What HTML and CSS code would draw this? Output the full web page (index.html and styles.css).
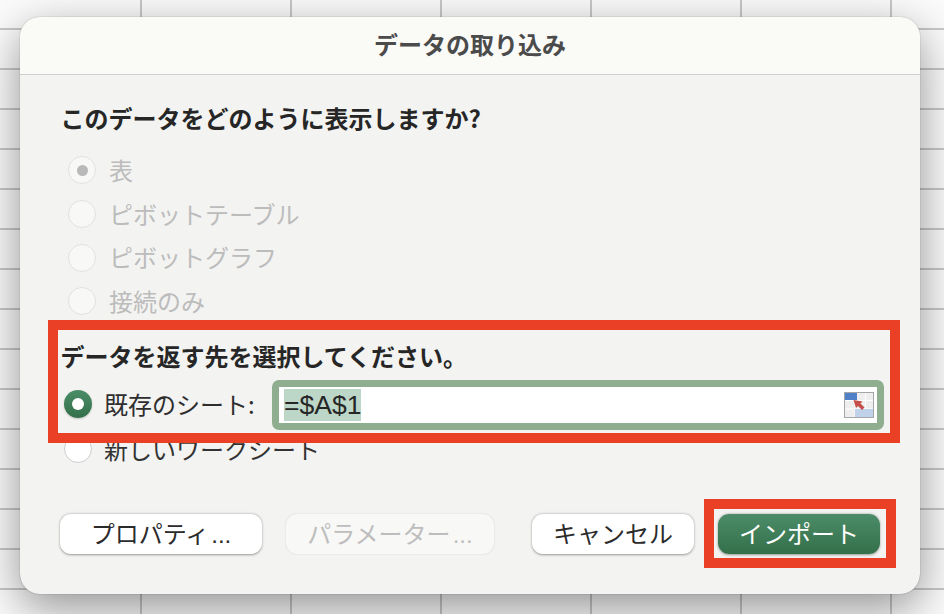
FILE: index.html
```html
<!DOCTYPE html>
<html lang="ja">
<head>
    <meta charset="utf-8">
    <title>データの取り込み</title>
    <link rel="stylesheet" href="styles.css">
</head>
<body>
    <div id="stage">
        <div id="dialog">
            <div id="titlebar">データの取り込み</div>
            <div id="content">
                <div class="heading">このデータをどのように表示しますか?</div>
                <div class="radio-group">
                    <div class="radio-row disabled"><span class="radio checked"></span><span class="radio-label">表</span></div>
                    <div class="radio-row disabled"><span class="radio"></span><span class="radio-label">ピボットテーブル</span></div>
                    <div class="radio-row disabled"><span class="radio"></span><span class="radio-label">ピボットグラフ</span></div>
                    <div class="radio-row disabled"><span class="radio"></span><span class="radio-label">接続のみ</span></div>
                </div>
                <div class="heading second">データを返す先を選択してください。</div>
                <div class="target-row">
                    <span class="radio active"></span>
                    <span class="target-label">既存のシート:</span>
                    <div class="range-input">
                        <span class="selection">=$A$1</span>
                        <svg class="range-icon" width="30" height="26" viewBox="0 0 30 26">
                            <rect x="0.5" y="0.5" width="29" height="25" fill="#eeeeee" stroke="#a6a6a6"/>
                            <path d="M1 8.5H29M1 17H29M11 1V25M21.5 1V25" stroke="#ffffff" stroke-width="1" fill="none"/>
                            <rect x="1" y="1" width="12" height="7" fill="#4f80c8"/>
                            <rect x="11" y="17" width="18" height="8" fill="#bfd2ea"/>
                            <path d="M9.5 8L18.5 9.5L16.5 11.5L20.5 15.5L18 18L14 14L12 16Z" fill="#c64f4b"/>
                        </svg>
                    </div>
                </div>
                <div class="radio-row new-sheet"><span class="radio"></span><span class="radio-label">新しいワークシート</span></div>
                <div class="button-row">
                    <button class="action-button properties">プロパティ<span class="dots">...</span></button>
                    <button class="action-button parameters" disabled>パラメーター<span class="dots">...</span></button>
                    <button class="action-button cancel">キャンセル</button>
                    <button class="action-button primary">インポート</button>
                </div>
            </div>
        </div>
        <div class="callout callout-target"></div>
        <div class="callout callout-import"></div>
    </div>
</body>
</html>
```

FILE: styles.css
```css
html, body {
    margin: 0;
    padding: 0;
}
body {
    width: 944px;
    height: 614px;
    overflow: hidden;
    font-family: "Noto Sans CJK JP", "Noto Sans", sans-serif;
    color: #2e2e2e;
}
#stage {
    position: relative;
    box-sizing: border-box;
    width: 944px;
    height: 614px;
    padding: 17px 24px 20px 20px;
    background-color: #fbfbfb;
    background-image:
        repeating-linear-gradient(to right, transparent 0, transparent 140px, #c8c8c8 140px, #c8c8c8 142px, transparent 142px, transparent 150px),
        repeating-linear-gradient(to bottom, transparent 0, transparent 28px, #c8c8c8 28px, #c8c8c8 30px, transparent 30px, transparent 40px);
}
#dialog {
    box-sizing: border-box;
    width: 900px;
    height: 577px;
    display: flex;
    flex-direction: column;
    background: #f3f3f1;
    border-radius: 20px;
    box-shadow: 0 0 1px rgba(0, 0, 0, 0.55), 0 14px 46px rgba(0, 0, 0, 0.42);
    overflow: hidden;
}
#titlebar {
    box-sizing: border-box;
    height: 57.5px;
    padding-bottom: 4px;
    flex: none;
    display: flex;
    align-items: center;
    justify-content: center;
    background: #fafaf7;
    border-bottom: 1.5px solid #cfcfcd;
    font-size: 24px;
    font-weight: 700;
    color: #4b4b4b;
}
#content {
    flex: 1;
    display: flex;
    flex-direction: column;
    padding: 27px 36px 40px 42px;
}
.heading {
    height: 32px;
    line-height: 32px;
    margin-left: -1.5px;
    font-size: 24px;
    font-weight: 700;
    color: #262626;
    white-space: nowrap;
}
.heading.second {
    margin-top: 17px;
}
.radio-group {
    margin-top: 15px;
}
.radio-row {
    height: 43.7px;
    display: flex;
    align-items: center;
    gap: 13px;
    font-size: 24px;
}
.radio-label {
    padding-bottom: 2px;
}
.radio-row.disabled {
    margin-left: 6px;
    color: #bcbcbc;
}
.radio {
    box-sizing: border-box;
    width: 28px;
    height: 28px;
    flex: none;
    display: flex;
    align-items: center;
    justify-content: center;
    border-radius: 50%;
    background: #ffffff;
    border: 1px solid #cdcdcd;
}
.disabled .radio {
    background: #f8f8f6;
    border-color: #e1e1df;
}
.radio.checked::after {
    content: "";
    width: 11px;
    height: 11px;
    border-radius: 50%;
    background: #b9b9b9;
}
.radio.active {
    margin-top: -2px;
    border: none;
    background: linear-gradient(#4b8d68, #33704a);
    box-shadow: 0 1px 2px rgba(0, 0, 0, 0.2);
}
.radio.active::after {
    content: "";
    width: 12px;
    height: 12px;
    border-radius: 50%;
    background: #ffffff;
}
.target-row {
    height: 50px;
    margin-top: 8px;
    margin-left: 2px;
    display: flex;
    align-items: center;
}
.target-label {
    flex: none;
    margin-left: 12px;
    margin-top: -3px;
    width: 168px;
    font-size: 24px;
    white-space: nowrap;
}
.range-input {
    box-sizing: border-box;
    width: 612px;
    height: 50px;
    flex: none;
    display: flex;
    align-items: center;
    justify-content: space-between;
    padding: 0 3px 0 5px;
    background: #ffffff;
    border: 7px solid #8fae8f;
    border-radius: 7px;
}
.selection {
    height: 32px;
    line-height: 32px;
    margin-top: -1px;
    background: #bcd6c8;
    font-family: "Liberation Sans", Arial, sans-serif;
    font-size: 26.5px;
    color: #262626;
}
.range-icon {
    flex: none;
}
.new-sheet {
    height: 38px;
    margin-left: 2px;
    gap: 12px;
    color: #333333;
}
.button-row {
    margin-top: auto;
    display: flex;
    align-items: center;
}
.action-button {
    box-sizing: border-box;
    height: 40px;
    padding: 0 0 3px;
    border: none;
    border-radius: 11px;
    background: #ffffff;
    color: #2b2b2b;
    font-family: inherit;
    font-size: 24px;
    white-space: nowrap;
    box-shadow: 0 0.5px 2.5px rgba(0, 0, 0, 0.38);
}
.dots {
    font-family: "Liberation Sans", Arial, sans-serif;
    margin-left: 2px;
}
.properties {
    width: 202px;
    margin-left: -2px;
}
.parameters {
    width: 208px;
    margin-left: 24px;
    background: #f8f8f6;
    color: #bdbdbd;
    box-shadow: 0 0 1.5px rgba(0, 0, 0, 0.18);
}
.cancel {
    width: 162px;
    margin-left: 38px;
}
.primary {
    width: 162px;
    margin-left: 24px;
    background: linear-gradient(#4c8c68, #33704a);
    color: #ffffff;
}
.callout {
    position: absolute;
    box-sizing: border-box;
    border: 10px solid #ea4025;
}
.callout-target {
    left: 48px;
    top: 320px;
    width: 852px;
    height: 123px;
}
.callout-import {
    left: 704px;
    top: 499px;
    width: 192px;
    height: 69px;
}
```
